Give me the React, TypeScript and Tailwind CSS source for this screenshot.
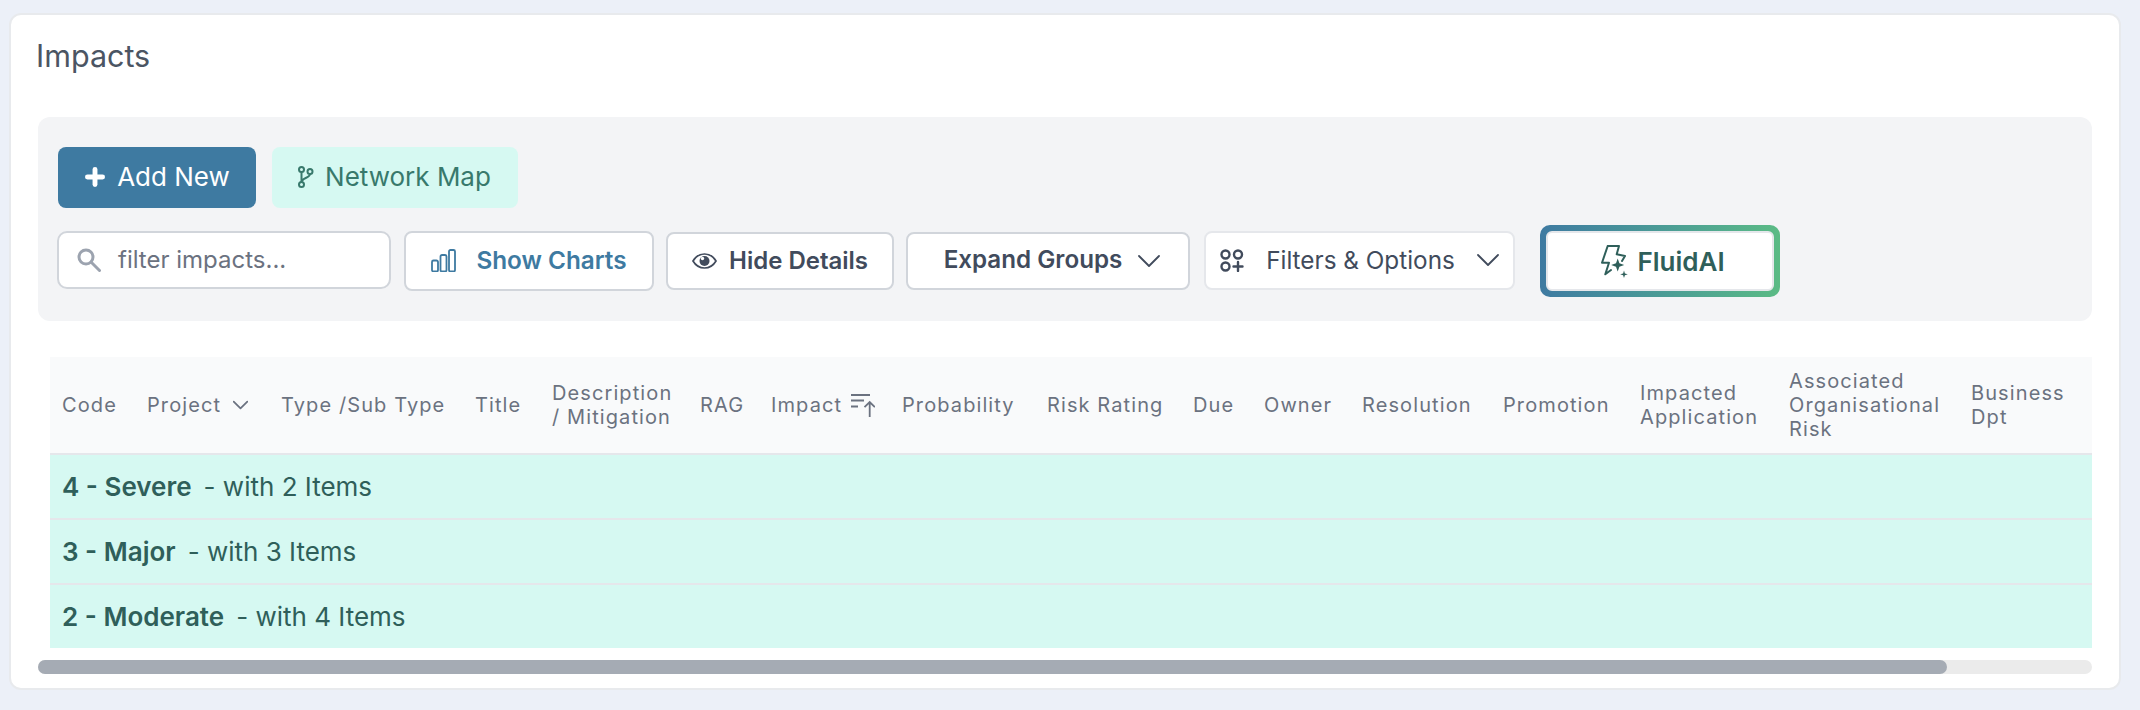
import { Plus } from 'lucide-react'

const FONT = "font-['Inter','Noto_Sans',sans-serif]"

const COLUMNS: { label: string; width: number }[] = [
  { label: 'Code', width: 85 },
  { label: 'Project', width: 134 },
  { label: 'Type /Sub Type', width: 194 },
  { label: 'Title', width: 77 },
  { label: 'Description / Mitigation', width: 148 },
  { label: 'RAG', width: 71 },
  { label: 'Impact', width: 131 },
  { label: 'Probability', width: 145 },
  { label: 'Risk Rating', width: 146 },
  { label: 'Due', width: 71 },
  { label: 'Owner', width: 98 },
  { label: 'Resolution', width: 141 },
  { label: 'Promotion', width: 137 },
  { label: 'Impacted Application', width: 149 },
  { label: 'Associated Organisational Risk', width: 182 },
  { label: 'Business Dpt', width: 133 },
]

const GROUPS = [
  { name: '4 - Severe', count: 2, rowClass: 'h-[65px] border-b-2 border-[#e5e7eb]' },
  { name: '3 - Major', count: 3, rowClass: 'h-[65px] border-b-2 border-[#e5e7eb]' },
  { name: '2 - Moderate', count: 4, rowClass: 'h-[64px]' },
]

function SearchIcon() {
  return (
    <svg viewBox="0 0 24 24" className="h-[24px] w-[24px]" fill="none" stroke="#9ca3af" strokeWidth="3" strokeLinecap="round">
      <circle cx="9" cy="9" r="7" />
      <path d="M14.500 14.500l8 8" />
    </svg>
  )
}

function BranchIcon() {
  return (
    <svg viewBox="0 0 17 22" className="h-[22px] w-[17px]" fill="none" stroke="#38796c" strokeWidth="2">
      <circle cx="4.500" cy="3.500" r="2.500" />
      <circle cx="13" cy="5.500" r="2.500" />
      <circle cx="4.500" cy="18.500" r="2.500" />
      <path d="M4.500 6v10M13 8c0 4-8.500 4-8.500 8" />
    </svg>
  )
}

function ChartsIcon() {
  return (
    <svg viewBox="0 0 25 23" className="h-[23px] w-[25px]" fill="none" stroke="#3e7aa1" strokeWidth="1.800">
      <rect x="1" y="11.500" width="6" height="11" rx="1.500" />
      <rect x="9.500" y="6" width="6" height="16.500" rx="1.500" />
      <rect x="18" y="1" width="6" height="21.500" rx="1.500" />
    </svg>
  )
}

function EyeIcon() {
  return (
    <svg viewBox="0 0 25 16" className="h-[16px] w-[25px]" fill="none">
      <path d="M1 8c2.600-4.400 6.800-7 11.500-7S21.400 3.600 24 8c-2.600 4.400-6.800 7-11.500 7S3.600 12.400 1 8Z" stroke="#414b5c" strokeWidth="1.700" />
      <circle cx="12.500" cy="8" r="5" fill="#414b5c" />
      <circle cx="10.500" cy="5.500" r="1.700" fill="#ffffff" />
    </svg>
  )
}

function CategoryPlusIcon() {
  return (
    <svg viewBox="0 0 24 23" className="h-[23px] w-[24px]" fill="none" stroke="#414b5c" strokeWidth="2.400" strokeLinecap="round">
      <circle cx="5.500" cy="5.500" r="4" />
      <circle cx="18" cy="5.500" r="4" />
      <circle cx="5.500" cy="17.500" r="4" />
      <path d="M18 13v9M13.500 17.500h9" />
    </svg>
  )
}

function ZapSparkIcon() {
  return (
    <svg viewBox="0 0 27 33" className="h-[33px] w-[27px]" fill="none">
      <path
        d="M6.700 1H18l-2.300 8.300L24 11l-3 5M6.700 1 1 17.700h7L4.300 29.300 10 25"
        stroke="#2f5f5a"
        strokeWidth="2"
        strokeLinejoin="round"
        strokeLinecap="round"
      />
      <path d="M16.700 13.500l1.700 4.800 4.800 1.700-4.800 1.700-1.700 4.800-1.700-4.800-4.800-1.700 4.800-1.700 1.700-4.800Z" fill="#2f5f5a" />
      <path d="M23 25.500l.9 2.900 2.900.9-2.900.9-.9 2.800-.9-2.800-2.900-.9 2.900-.9.9-2.900Z" fill="#2f5f5a" />
    </svg>
  )
}

function SortIcon() {
  return (
    <svg viewBox="0 0 24 23" className="h-[23px] w-[24px]" fill="none" stroke="#6b7280" strokeWidth="1.800">
      <path d="M0 1h19M0 6.500h13M0 12.500h7M18.700 23V8M13.500 13.200l5.200-5.200 5.200 5.200" />
    </svg>
  )
}

function Chevron({ className, stroke, weight = 1.8 }: { className: string; stroke: string; weight?: number }) {
  return (
    <svg viewBox="0 0 22 12" className={className} fill="none" stroke={stroke} strokeWidth={weight} strokeLinecap="round" strokeLinejoin="round">
      <path d="M1 1l10 10L21 1" />
    </svg>
  )
}

export default function App() {
  return (
    <div className={`${FONT} h-[710px] w-[2140px] overflow-hidden bg-[#ecf0f8] pl-[9px] pt-[13px]`}>
      <div className="flex h-[677px] w-[2112px] flex-col rounded-[12px] border-2 border-[#e8eaed] bg-white">
        <h1 className="mb-[28px] ml-[25px] mt-[24px] h-[50px] text-[30.500px] font-normal leading-[34px] text-[#4b5563]">Impacts</h1>

        <div className="mx-[27px] h-[204px] rounded-[12px] bg-[#f3f4f6] pl-[20px] pt-[30px]">
          <div className="flex gap-[16px]">
            <button type="button" className="flex h-[61px] w-[198px] items-center justify-center gap-[9px] rounded-[8px] bg-[#3e7aa1] pb-[2px] pr-[2px] text-[26px] font-normal text-white">
              <Plus className="h-[26px] w-[26px]" strokeWidth={4.500} />
              Add New
            </button>
            <button type="button" className="flex h-[61px] w-[246px] items-center justify-center gap-[11px] rounded-[8px] bg-[#d6f9f2] pb-[2px] pr-[2px] text-[26px] font-normal text-[#38796c]">
              <BranchIcon />
              Network Map
            </button>
          </div>

          <div className="-ml-[1px] mt-[23px] flex items-start gap-[12px]">
            <div className="flex h-[58px] w-[334px] items-center rounded-[10px] border-2 border-[#d1d5db] bg-white pb-[1px] pl-[18px]">
              <SearchIcon />
              <span className="ml-[17px] text-[24px] text-[#6b7280]">filter impacts...</span>
            </div>
            <button type="button" className="ml-[1px] flex h-[60px] w-[250px] items-center justify-center gap-[20px] rounded-[8px] border-2 border-[#d1d5db] bg-white pb-[2px] text-[24.300px] font-semibold text-[#3e7aa1]">
              <ChartsIcon />
              Show Charts
            </button>
            <button type="button" className="mt-[1px] flex h-[58px] w-[228px] items-center justify-center gap-[12px] rounded-[8px] border-2 border-[#d1d5db] bg-white pb-[1px] text-[24px] font-semibold text-[#414b5c]">
              <EyeIcon />
              Hide Details
            </button>
            <button type="button" className="mt-[1px] flex h-[58px] w-[284px] items-center justify-center gap-[16px] rounded-[8px] border-2 border-[#d1d5db] bg-white pb-[1px] pl-[8px] text-[24.200px] font-semibold text-[#414b5c]">
              Expand Groups
              <Chevron className="h-[12px] w-[22px]" stroke="#414b5c" />
            </button>
            <button type="button" className="ml-[2px] flex h-[59px] w-[311px] items-center justify-between rounded-[8px] border-2 border-[#e5e7eb] bg-white pb-[1px] pl-[14px] pr-[14px] text-[24.300px] font-normal text-[#414b5c]">
              <CategoryPlusIcon />
              <span>Filters &amp; Options</span>
              <Chevron className="h-[12px] w-[22px]" stroke="#414b5c" />
            </button>
            <div className="-mt-[6px] ml-[13px] h-[72px] w-[240px] rounded-[10px] bg-gradient-to-r from-[#3e7aa1] to-[#5bbb85] p-[6px]">
              <button type="button" className="flex h-full w-full items-center justify-center gap-[9px] rounded-[6px] border-2 border-[#e5e7eb] bg-white pl-[6px] text-[26px] font-semibold text-[#2f5f5a]">
                <ZapSparkIcon />
                FluidAI
              </button>
            </div>
          </div>
        </div>

        <div className="mx-[27px] mt-[36px] overflow-hidden pl-[12px]">
          <table className="w-[2042px] table-fixed border-collapse">
            <colgroup>
              {COLUMNS.map((col) => (
                <col key={col.label} style={{ width: col.width }} />
              ))}
            </colgroup>
            <thead>
              <tr className="h-[97px] border-b-2 border-[#e5e7eb] bg-[#f9fafb]">
                {COLUMNS.map((col) => (
                  <th key={col.label} className="px-[12px] text-left text-[20px] font-normal leading-[24px] tracking-[0.055em] text-[#6b7280]">
                    {col.label === 'Project' ? (
                      <span className="flex items-center gap-[12px]">
                        Project <Chevron className="h-[10px] w-[15px]" stroke="#6b7280" weight={2.6} />
                      </span>
                    ) : col.label === 'Impact' ? (
                      <span className="flex items-center gap-[9px]">
                        Impact <SortIcon />
                      </span>
                    ) : (
                      col.label
                    )}
                  </th>
                ))}
              </tr>
            </thead>
            <tbody>
              {GROUPS.map((group) => (
                <tr key={group.name} className={`bg-[#d6f9f2] ${group.rowClass}`}>
                  <td colSpan={COLUMNS.length} className="px-[12px] text-[26px] text-[#2f5f5a]">
                    <span className="font-semibold">{group.name}</span>
                    <span className="ml-[12px]">- with {group.count} Items</span>
                  </td>
                </tr>
              ))}
            </tbody>
          </table>
        </div>

        <div className="mx-[27px] mt-[12px] h-[14px] rounded-full bg-[#ebebeb]">
          <div className="h-full w-[1909px] rounded-full bg-[#a5abb4]" />
        </div>
      </div>
    </div>
  )
}
